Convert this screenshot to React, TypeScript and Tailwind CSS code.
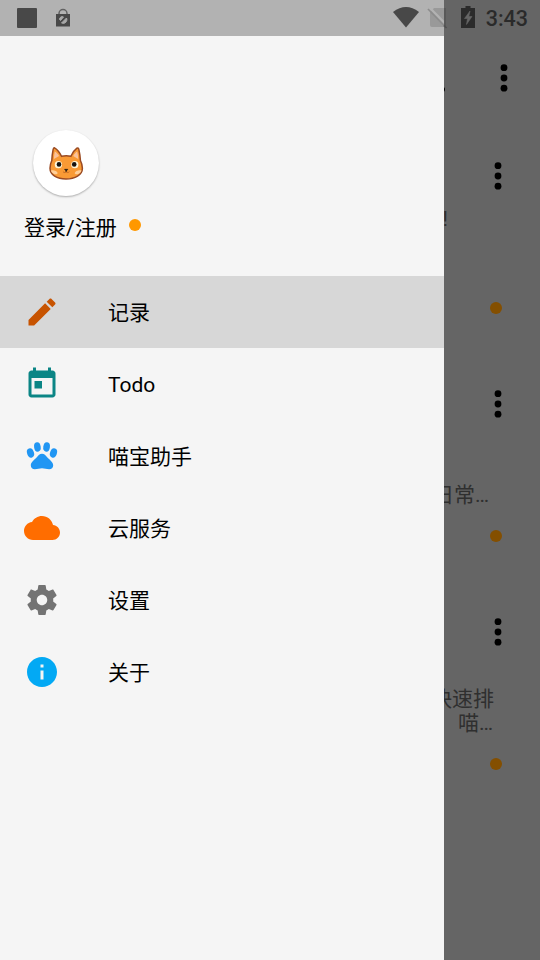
import type { ReactNode } from "react";

interface IconProps {
  path: string;
  className: string;
}

const Icon: React.FC<IconProps> = ({ path, className }) => (
  <svg viewBox="0 0 24 24" className={`size-9 fill-current ${className}`}>
    <path d={path} />
  </svg>
);

const PawIcon = () => (
  <svg viewBox="0 0 36 36" className="size-9 fill-[#2196f3]">
    <ellipse cx="6.5" cy="15" rx="3.4" ry="4.700" transform="rotate(-20 6.5 15)" />
    <ellipse cx="13.4" cy="9" rx="3.3" ry="4.700" transform="rotate(-8 13.4 9)" />
    <ellipse cx="22.600" cy="9" rx="3.3" ry="4.700" transform="rotate(8 22.600 9)" />
    <ellipse cx="29.500" cy="15" rx="3.4" ry="4.700" transform="rotate(20 29.500 15)" />
    <path d="M18 15.700c-2.300 0-3.700 1.800-5.200 3.500-2.200 2.500-6 4.600-6 8.100 0 2.400 1.700 4 4 4 2.700 0 4.700-1 7.200-1s4.500 1 7.200 1c2.300 0 4-1.600 4-4 0-3.500-3.800-5.600-6-8.100-1.500-1.700-2.900-3.500-5.200-3.500z" />
  </svg>
);

const CatIcon = () => (
  <svg viewBox="0 0 36 36" className="size-9">
    <path
      d="M6.500 2.800c-.8 0-1.200.7-1.400 1.800C4.300 8.500 4 12 3.800 15.500 2.600 18 2 20.500 2 23.300 2 29.800 9 34 18 34s16.400-4.200 16.400-10.700c0-2.800-.7-5.300-2-7.800-.2-3.500-.6-7-1.500-10.900-.3-1.300-1-1.900-2-1.400-2.600 1.900-4.600 5-6 8.100-3-.8-6.400-.8-9.400 0C12 8 9.500 4.500 6.500 2.800z"
      fill="#f99a35"
      stroke="#9a4a22"
      strokeWidth="1.500"
    />
    <path d="M6.800 6.500c-.6 2.500-.8 4.900-.9 7.500l5.200-3C10 9 8.500 7.500 6.800 6.500zM29.200 6.500c.7 2.500.9 4.900 1 7.500l-5-3c1-2 2.400-3.500 4-4.500z" fill="#fbc29a" />
    <path d="M2.800 25.500c2.700-.7 5.700 0 7 2.700-1.300 1.300-3 1.400-3.800.8-1.700-1-2.700-2-3.200-3.500zM33.600 25.500c-2.700-.7-5.700 0-7 2.700 1.300 1.300 3 1.400 3.800.8 1.700-1 2.700-2 3.200-3.500z" fill="#ffcf99" />
    <circle cx="10.400" cy="19.700" r="3.600" fill="#fff6d8" />
    <circle cx="26.800" cy="19.700" r="3.600" fill="#fff6d8" />
    <circle cx="11" cy="19.400" r="2.300" fill="#171310" />
    <circle cx="26.200" cy="19.400" r="2.300" fill="#171310" />
    <path d="M16.500 24.300h3.400l-1.300 1.500v1h-.8v-1z" fill="#171310" stroke="#171310" strokeWidth=".5" />
    <path d="M15 26.700c1.200 1.200 2.400 1.100 3.200 0 .9 1.100 2 1.200 3.200 0" fill="none" stroke="#b85e20" strokeWidth=".8" />
  </svg>
);

const MoreIcon = () => (
  <svg viewBox="0 0 8 30" className="h-[30px] w-2 fill-black">
    <circle cx="4" cy="4.700" r="3.400" />
    <circle cx="4" cy="15" r="3.400" />
    <circle cx="4" cy="25.200" r="3.400" />
  </svg>
);

interface MenuItemProps {
  name: string;
  icon: ReactNode;
  active?: boolean;
}

const MenuItem: React.FC<MenuItemProps> = ({ name, icon, active }) => (
  <li
    className={`flex h-[72px] items-center gap-12 pl-6 text-[21px] leading-none text-black ${
      active ? "bg-[#d7d7d7]" : ""
    }`}
  >
    {icon}
    <span className="pt-[3px]">{name}</span>
  </li>
);

const menu: MenuItemProps[] = [
  {
    name: "记录",
    active: true,
    icon: (
      <Icon
        className="text-[#c75300]"
        path="M3 17.250V21h3.750L17.810 9.940l-3.750-3.750L3 17.250zM20.710 7.040c.39-.39.39-1.020 0-1.410l-2.340-2.340c-.39-.39-1.020-.39-1.410 0l-1.830 1.830 3.750 3.750 1.830-1.830z"
      />
    ),
  },
  {
    name: "Todo",
    icon: (
      <Icon
        className="text-[#0b8585]"
        path="M19 3h-1V1h-2v2H8V1H6v2H5c-1.110 0-1.990.9-1.990 2L3 19c0 1.100.89 2 2 2h14c1.100 0 2-.9 2-2V5c0-1.100-.9-2-2-2zm0 16H5V8h14v11zM7 10h5v5H7z"
      />
    ),
  },
  { name: "喵宝助手", icon: <PawIcon /> },
  {
    name: "云服务",
    icon: (
      <Icon
        className="text-[#ff6d00]"
        path="M19.350 10.040C18.670 6.590 15.640 4 12 4 9.110 4 6.600 5.640 5.350 8.040 2.340 8.360 0 10.910 0 14c0 3.310 2.690 6 6 6h13c2.760 0 5-2.240 5-5 0-2.640-2.050-4.780-4.650-4.960z"
      />
    ),
  },
  {
    name: "设置",
    icon: (
      <Icon
        className="text-[#737373]"
        path="M19.430 12.980c.04-.32.07-.64.07-.98s-.03-.66-.07-.98l2.110-1.650c.19-.15.24-.42.12-.64l-2-3.460c-.12-.22-.39-.3-.61-.22l-2.490 1c-.52-.4-1.080-.73-1.690-.98l-.38-2.650C14.460 2.180 14.250 2 14 2h-4c-.25 0-.46.18-.49.42l-.38 2.650c-.61.25-1.170.59-1.690.98l-2.490-1c-.23-.09-.49 0-.61.22l-2 3.460c-.13.22-.07.49.12.64l2.110 1.650c-.04.32-.07.65-.07.98s.03.66.07.98l-2.110 1.650c-.19.15-.24.42-.12.64l2 3.460c.12.22.39.3.61.22l2.490-1c.52.4 1.080.73 1.690.98l.38 2.650c.03.24.24.42.49.42h4c.25 0 .46-.18.49-.42l.38-2.650c.61-.25 1.170-.59 1.690-.98l2.490 1c.23.09.49 0 .61-.22l2-3.460c.12-.22.07-.49-.12-.64l-2.110-1.650zM12 15.500c-1.930 0-3.500-1.570-3.500-3.500s1.570-3.500 3.500-3.500 3.500 1.570 3.500 3.500-1.570 3.500-3.500 3.500z"
      />
    ),
  },
  {
    name: "关于",
    icon: (
      <Icon
        className="text-[#03a9f4]"
        path="M12 2C6.480 2 2 6.480 2 12s4.480 10 10 10 10-4.480 10-10S17.520 2 12 2zm1 15h-2v-6h2v6zm0-8h-2V7h2v2z"
      />
    ),
  },
];

const Drawer = () => (
  <aside className="w-[444px] shrink-0 bg-[#f5f5f5]">
    <div className="h-9 bg-[#b2b2b2]" />
    <div className="flex h-60 flex-col pt-[94px] pl-6">
      <div className="ml-[9px] flex size-[66px] items-center justify-center rounded-full bg-white pb-px shadow-[0_1px_2px_rgba(0,0,0,0.3)]">
        <CatIcon />
      </div>
      <div className="mt-[20px] flex items-center gap-3 text-[21px] leading-6 text-black">
        <span>登录/注册</span>
        <span className="-mt-1.5 size-3 rounded-full bg-[#ff9800]" />
      </div>
    </div>
    <ul>
      {menu.map((item) => (
        <MenuItem key={item.name} {...item} />
      ))}
    </ul>
  </aside>
);

interface NoteProps {
  children: ReactNode;
}

const Note: React.FC<NoteProps> = ({ children }) => (
  <article className="flex h-[228px] flex-col items-end pt-[41px] pr-[38px]">
    <MoreIcon />
    <div className="flex h-[111px] w-full flex-col items-end text-[21px] leading-6 whitespace-nowrap text-[#2f2f2f]">
      {children}
    </div>
    <span className="size-3 rounded-full bg-[#844f00]" />
  </article>
);

const Notes = () => (
  <main className="w-24 overflow-hidden bg-[#656565]">
    <div className="flex h-[120px] justify-between pt-[63px] pr-8">
      <span className="mt-6 -ml-1 size-[5px] rounded-full bg-black" />
      <MoreIcon />
    </div>
    <Note>
      <span className="mt-4 mr-[54px]">!</span>
    </Note>
    <Note>
      <span className="mt-16 mr-[13px]">日常…</span>
    </Note>
    <Note>
      <span className="mt-10 mr-2">快速排</span>
      <span className="mr-[9px]">喵…</span>
    </Note>
  </main>
);

const StatusBar = () => (
  <header className="absolute inset-x-0 top-0 flex h-9 items-center pr-3 pl-[17px]">
    <span className="size-5 rounded-[1px] bg-[#484848]" />
    <svg viewBox="0 0 14 20" className="ml-[19px] h-5 w-3.5">
      <path d="M3 7V5.500a4 4 0 0 1 8 0V7" fill="none" stroke="#626262" strokeWidth="1.500" />
      <path d="M0 6h14v12.500H0z" fill="#484848" />
      <path d="M3.500 11.500c0-2.500 2.500-3.500 4-2.500L4.500 12.500zM10.500 10c1.500 3-1.500 6.500-5 5z" fill="#a9a9a9" stroke="#a9a9a9" />
    </svg>
    <svg viewBox="0 0 60 36" className="ml-auto h-9 w-[60px]">
      <path d="M5 12Q18 2 31 12L18 27.500z" fill="#484848" />
      <path d="M46 8h10v19H44q-2 0-2-2V12z" fill="#999" />
      <path d="M41 7l18 18.500" stroke="#b2b2b2" strokeWidth="2.500" />
      <path d="M40 9l17 17.500" stroke="#8c8c8c" strokeWidth="1.700" />
      <path d="M56 0h4v36h-4z" fill="#656565" />
      <path d="M56 8h2v18h-2z" fill="#595959" />
      <path d="M56 25.500l2.500 2.500" stroke="#505050" strokeWidth="1.700" />
    </svg>
    <svg viewBox="0 0 14 22" className="-mt-0.5 ml-[13px] h-[22px] w-3.5">
      <path d="M4.500 0h5v2H14v20H0V2h4.500z" fill="#2b2b2b" />
      <path d="M9 5L3.500 12.500h3L5.500 18.500l5.500-8H7.800z" fill="#656565" stroke="#656565" strokeWidth=".6" />
    </svg>
    <time className="mt-0.5 ml-[11px] text-[21.500px] leading-none font-medium text-[#2a2a2a]">3:43</time>
  </header>
);

export default function App() {
  return (
    <div className="relative flex h-[960px] w-[540px] overflow-hidden font-['Roboto','Noto_Sans_CJK_SC',sans-serif]">
      <Drawer />
      <Notes />
      <StatusBar />
    </div>
  );
}
